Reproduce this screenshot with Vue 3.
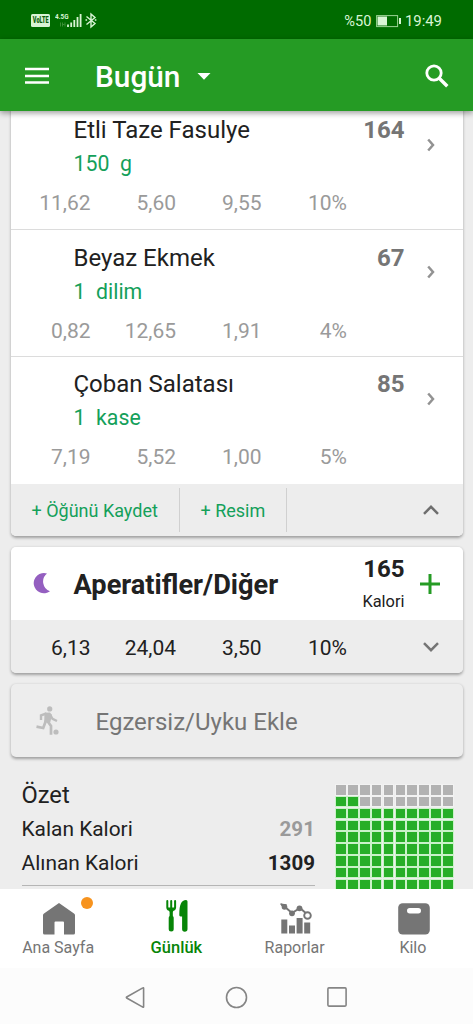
<script setup>
const foods = [
  { name: 'Etli Taze Fasulye', amount: '150  g', kcal: '164', macros: ['11,62', '5,60', '9,55', '10%'] },
  { name: 'Beyaz Ekmek', amount: '1  dilim', kcal: '67', macros: ['0,82', '12,65', '1,91', '4%'] },
  { name: 'Çoban Salatası', amount: '1  kase', kcal: '85', macros: ['7,19', '5,52', '1,00', '5%'] },
]
const snackMacros = ['6,13', '24,04', '3,50', '10%']
const isFilled = (n) => n > 20 || n === 11 || n === 12
</script>

<template>
  <div class="screen">
    <div class="status">
      <div class="signals">
        <span class="volte"><b>VoLTE</b></span>
        <span class="net">4.5G</span>
        <svg width="41" height="20" viewBox="26 0 41 20">
          <path d="M29.500 12.500v4M31.500 12.500v4M34 12.500v4M31.500 14.500h2" stroke="#3f923a" stroke-width=".9" fill="none" />
          <path d="M37 14.500v2.500M40.200 12.500v4.500M43.300 10v7M46.500 7v10M49.600 4v13" stroke="#d9f5d5" stroke-width="1.800" />
          <path d="M55.500 6.500l8.500 7-4 3.500v-13l4 3.500-8.500 7" fill="none" stroke="#d9f5d5" stroke-width="1.400" />
          <path d="M54.500 10h1.600M63.800 10h1.600" stroke="#d9f5d5" stroke-width="1.600" />
        </svg>
      </div>
      <div class="status-right">
        <span>%50</span>
        <svg width="26" height="14" viewBox="0 0 26 14">
          <rect x=".6" y="1.600" width="21" height="11" fill="none" stroke="#9bd394" stroke-width="1" />
          <rect x="1.500" y="2.500" width="9.500" height="9" fill="#d9f5d5" />
          <rect x="23" y="4" width="2" height="6" fill="#d9f5d5" />
        </svg>
        <span class="clock">19:49</span>
      </div>
    </div>

    <header class="appbar">
      <svg width="24" height="18" viewBox="0 0 24 18"><path d="M0 2h24M0 9h24M0 15.500h24" stroke="#fff" stroke-width="2.400" /></svg>
      <h1>Bugün</h1>
      <svg class="caret" width="14" height="7" viewBox="0 0 14 7"><path d="M.5 0h13L7 6.800z" fill="#fff" /></svg>
      <svg class="search" width="24" height="24" viewBox="0 0 24 24">
        <circle cx="9" cy="9" r="7.200" fill="none" stroke="#fff" stroke-width="2.800" />
        <path d="M14 14l8.300 8.300" stroke="#fff" stroke-width="3.400" />
      </svg>
    </header>

    <main class="content">
      <section class="card meal">
        <article v-for="f in foods" :key="f.name" class="food">
          <div class="food-main">
            <div class="food-text">
              <div class="name">{{ f.name }}</div>
              <div class="amount">{{ f.amount }}</div>
            </div>
            <div class="kcal">{{ f.kcal }}</div>
            <svg class="chev" width="8" height="14" viewBox="0 0 8 14"><path d="M1.200 1.500L6 7l-4.800 5.500" fill="none" stroke="#929292" stroke-width="2.500" /></svg>
          </div>
          <div class="macros">
            <span v-for="m in f.macros" :key="m">{{ m }}</span>
          </div>
        </article>
        <div class="actions">
          <span class="save">+ Öğünü Kaydet</span>
          <span class="photo">+ Resim</span>
          <svg class="fold" width="16" height="10" viewBox="0 0 16 10"><path d="M1 8.800l7-7 7 7" fill="none" stroke="#6e6e6e" stroke-width="2.500" /></svg>
        </div>
      </section>

      <section class="card snack">
        <div class="snack-head">
          <svg class="moon" width="18" height="22" viewBox="0 0 18 22"><path d="M14 1.400A10.200 10.200 0 1 0 17 19.300A10.400 10.400 0 0 1 14 1.400z" fill="#945fc0" /></svg>
          <h2>Aperatifler/Diğer</h2>
          <div class="total"><b>165</b><span>Kalori</span></div>
          <svg class="plus" width="20" height="20" viewBox="0 0 20 20"><path d="M0 10h20M10 0v20" stroke="#259b24" stroke-width="3" /></svg>
        </div>
        <div class="snack-foot">
          <div class="macros dark">
            <span v-for="m in snackMacros" :key="m">{{ m }}</span>
          </div>
          <svg class="fold" width="16" height="10" viewBox="0 0 16 10"><path d="M1 1.200l7 7 7-7" fill="none" stroke="#757575" stroke-width="2.500" /></svg>
        </div>
      </section>

      <section class="card exercise">
        <svg width="24" height="30" viewBox="0 0 24 30">
          <circle cx="13.700" cy="2.900" r="2.600" fill="#bdbdbd" />
          <path d="M5 14V9.400L10.500 7.500M14 8.500l2.500 4.300 4.500 2.200" fill="none" stroke="#bdbdbd" stroke-width="2.400" />
          <path d="M8.500 6.800l5.500-.3 2 2.500-1.800 7.500-6-.5z" fill="#bdbdbd" />
          <path d="M10 14.500l-2.800 7.500-6.700-1.300M11 14.500l4 5.500v8.700" fill="none" stroke="#bdbdbd" stroke-width="2.700" />
          <circle cx="20" cy="26" r="2.600" fill="#bdbdbd" />
        </svg>
        <span>Egzersiz/Uyku Ekle</span>
      </section>

      <section class="summary">
        <div class="figures">
          <h3>Özet</h3>
          <div class="figure"><span>Kalan Kalori</span><b class="muted">291</b></div>
          <div class="figure"><span>Alınan Kalori</span><b>1309</b></div>
        </div>
        <div class="cells">
          <i v-for="n in 100" :key="n" :class="{ on: isFilled(n) }" />
        </div>
      </section>
    </main>

    <nav class="tabs">
      <div class="tab">
        <svg width="32" height="32" viewBox="0 0 32 32"><path d="M16 0L31 10.500a2 2 0 0 1 1 1.600V30a1.500 1.500 0 0 1-1.500 1.500H21V19.500a1 1 0 0 0-1-1h-7.500a1 1 0 0 0-1 1v12h-10A1.500 1.500 0 0 1 0 30V12.100a2 2 0 0 1 1-1.600z" fill="#757575" /></svg>
        <i class="dot" />
        <span>Ana Sayfa</span>
      </div>
      <div class="tab active">
        <svg width="22" height="32" viewBox="0 0 22 32">
          <path d="M1.300 1v6.500q0 2.500 3.900 2.500t3.900-2.500V1M5.200 1v16" fill="none" stroke="#078507" stroke-width="2" stroke-linecap="round" />
          <path d="M1.300 7.500h7.800L6.800 12v4H3.600v-4z" fill="#078507" />
          <path d="M5.200 18v11" stroke="#078507" stroke-width="5" stroke-linecap="round" />
          <path d="M21.500 29a2.700 2.700 0 0 1-5.400 0V16.500h-1.600a1.500 1.500 0 0 1-1.200-1.600Q13 0 20 0a1.500 1.500 0 0 1 1.500 1.500z" fill="#078507" />
        </svg>
        <span>Günlük</span>
      </div>
      <div class="tab">
        <svg width="32" height="31" viewBox="0 0 32 31">
          <path d="M1 1l4 3 7 6 8-5 8 7" fill="none" stroke="#757575" stroke-width="1.900" />
          <path d="M0 .5l7 .8L3.500 6z" fill="#757575" />
          <circle cx="4.500" cy="4" r="2.800" fill="#757575" /><circle cx="12" cy="10.300" r="2.900" fill="#757575" /><circle cx="19.500" cy="5.300" r="2.900" fill="#757575" />
          <circle cx="27.500" cy="12.500" r="3.300" fill="#fff" stroke="#757575" stroke-width="1.900" />
          <path d="M1.300 16.500h6v14h-6zM9 22.500h6v8H9zM16.600 15h6v15.500h-6zM24.200 19.500h6v11h-6z" fill="#757575" />
        </svg>
        <span>Raporlar</span>
      </div>
      <div class="tab">
        <svg width="32" height="32" viewBox="0 0 32 32"><rect x=".2" y=".2" width="31.600" height="31.300" rx="4.500" fill="#757575" /><rect x="9" y="5" width="14" height="5.500" rx="2.750" fill="#fff" /></svg>
        <span>Kilo</span>
      </div>
    </nav>

    <footer class="system">
      <svg width="20" height="23" viewBox="0 0 20 23"><path d="M18.600 2.300v18.400q0 .9-.8.400L1.700 12q-.7-.5 0-1L17.800 1.900q.8-.5.8.4z" fill="none" stroke="#858585" stroke-width="1.600" /></svg>
      <svg width="23" height="23" viewBox="0 0 23 23"><circle cx="11.500" cy="11.500" r="10" fill="none" stroke="#858585" stroke-width="1.600" /></svg>
      <svg width="20" height="20" viewBox="0 0 20 20"><rect x=".9" y=".9" width="18.200" height="18.200" rx="1" fill="none" stroke="#858585" stroke-width="1.600" /></svg>
    </footer>
  </div>
</template>

<style>
body { margin: 0; background: #ededed; }
</style>

<style scoped>
* { box-sizing: border-box; }
svg { display: block; flex: none; }
h1, h2, h3 { margin: 0; }
.screen {
  width: 473px; height: 1024px; overflow: hidden;
  display: flex; flex-direction: column;
  font-family: Roboto, "Noto Sans", sans-serif;
  color: #212121; background: #ededed; white-space: pre;
}
.status {
  height: 39px; flex: none; background: #006b00; color: #d9f5d5;
  display: flex; align-items: flex-start; justify-content: space-between;
  padding: 10px 31px 0 31px; font-size: 15px;
}
.signals { display: flex; align-items: flex-start; height: 20px; }
.volte {
  width: 19px; height: 13px; margin-top: 4px; border-radius: 1.500px; background: #d9f5d5; color: #0b600b;
  display: flex; align-items: center; justify-content: center; font-size: 9px; line-height: 13px;
}
.volte b { font-weight: 900; transform: scaleX(.62); }
.net { width: 13px; margin: 2px -11px 0 5px; font-size: 8px; line-height: 9px; font-weight: 700; transform: scaleX(.8); transform-origin: left; }
.status-right { display: flex; align-items: center; height: 21px; font-size: 14.600px; }
.status-right svg { margin: 0 3px 0 4.500px; }
.status-right .clock { font-size: 14.900px; }
.appbar {
  height: 72px; flex: none; background: #259b24; color: #fff;
  display: flex; align-items: center; padding: 2px 24px 0 25px;
  position: relative; z-index: 1; box-shadow: 0 2px 6px rgba(0, 0, 0, .4);
}
.appbar h1 { font-size: 29.800px; font-weight: 500; line-height: 34px; margin: 2px 0 0 46px; }
.caret { margin-left: 17px; }
.search { margin-left: auto; }
.content { height: 778px; flex: none; overflow: hidden; padding: 0 10.500px; }
.card {
  width: 452px; border-radius: 5px; overflow: hidden;
  box-shadow: 0 1.500px 3px rgba(0, 0, 0, .33); margin-bottom: 11px;
}
.meal { background: #fff; height: 434px; margin-top: -9px; }
.food { height: 127.300px; border-bottom: 1px solid #dcdcdc; padding-top: 14px; }
.food:first-child { height: 128px; }
.food:nth-child(3) { height: 126.600px; border-bottom: 0; padding-top: 13.200px; }
.food-main { display: flex; height: 72px; padding-left: 63px; }
.food:nth-child(2) { padding-top: 13.500px; }
.food-text { flex: 1; }
.name { font-size: 24px; line-height: 28px; }
.amount { font-size: 21.300px; line-height: 30px; margin-top: 5px; color: #14a05a; }
.kcal { font-size: 24px; font-weight: 700; line-height: 28px; color: #757575; }
.chev { margin: 21.500px 27.500px 0 22.500px; }
.macros {
  display: grid; grid-template-columns: 80px 85.500px 85.500px 85.500px;
  text-align: right; font-size: 21px; line-height: 30px; color: #9a9a9a;
}
.macros.dark { color: #212121; padding-top: 2px; }
.actions { height: 52px; background: #ededed; display: flex; align-items: center; color: #14a05a; font-size: 18px; }
.save { width: 169px; padding-left: 21px; height: 44px; line-height: 46px; border-right: 1px solid #d0d0d0; }
.photo { width: 107px; padding-left: 21px; height: 44px; line-height: 46px; border-right: 1px solid #d0d0d0; }
.fold { margin-left: auto; margin-right: 24px; }
.snack { height: 126px; }
.snack-head { height: 73px; background: #fff; display: flex; align-items: center; padding: 0 22.500px 0 22px; }
.moon { margin-bottom: 2px; }
.snack-head h2 { font-size: 27.200px; line-height: 32px; margin: 2px 0 0 23px; }
.total { margin-left: auto; text-align: right; display: flex; flex-direction: column; }
.total b { font-size: 24px; line-height: 30px; }
.total span { font-size: 16.400px; line-height: 22px; margin-top: 7px; }
.plus { margin-left: 15.500px; }
.snack-foot { height: 53px; background: #ededed; display: flex; align-items: center; }
.exercise { height: 73px; background: #ededed; display: flex; align-items: center; padding-left: 25px; color: #757575; font-size: 24px; }
.exercise span { margin: 2px 0 0 36px; }
.summary { display: flex; align-items: flex-start; padding: 12px 10px 0 11px; }
.figures { width: 294px; height: 106px; border-bottom: 1px solid #b5b5b5; }
.figures h3 { font-size: 23.700px; font-weight: 400; line-height: 30px; margin-bottom: 2px; }
.figure { display: flex; justify-content: space-between; font-size: 20.900px; line-height: 33.500px; position: relative; top: 1px; }
.figure b { font-size: 20.500px; }
.figure .muted { color: #9a9a9a; }
.cells { display: grid; grid-template-columns: repeat(10, 9.500px); grid-auto-rows: 9.500px; gap: 2.350px; margin: 5px 0 0 21.500px; }
.cells i { background: #b2b2b2; outline: 1px solid #f2f2f2; }
.cells .on { background: #27ae27; outline-color: #caf2c8; }
.tabs { height: 79px; flex: none; background: #fff; display: grid; grid-template-columns: repeat(4, 118.250px); position: relative; }
.tab { position: relative; height: 79px; padding-top: 14px; display: flex; flex-direction: column; align-items: center; color: #757575; font-size: 16px; }
.tab span { line-height: 20px; margin: auto 2px 10px 0; }
.tab.active { color: #078507; padding-top: 11px; }
.tab.active span { font-weight: 500; font-size: 16.500px; }
.dot { position: absolute; left: 81px; top: 8px; width: 12px; height: 12px; border-radius: 50%; background: #f7931e; }
.system { height: 56px; flex: none; background: #fcfcfc; display: flex; align-items: center; padding: 2px 0 0 125px; gap: 79.500px; }
</style>
